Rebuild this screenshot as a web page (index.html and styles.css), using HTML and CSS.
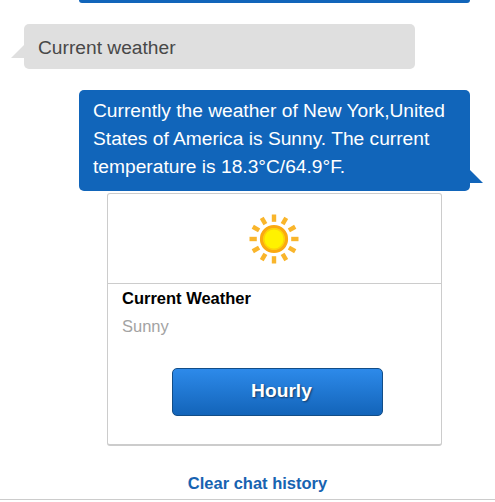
FILE: index.html
```
<!DOCTYPE html>
<html lang="en">
<head>
<meta charset="utf-8">
<title>Weather chat</title>
<link rel="stylesheet" href="styles.css">
</head>
<body>
<main class="chat">
  <div class="bubble bot previous"></div>
  <div class="bubble user">Current weather</div>
  <div class="bubble bot reply">Currently the weather of New York,United States of America is Sunny. The current temperature is 18.3°C/64.9°F.</div>
  <section class="card">
    <div class="card-image">
      <svg class="sun" viewBox="-25 -25 50 50" aria-hidden="true">
        <g stroke="#f9b52b" stroke-width="4.4">
          <path id="ray" d="M0-24.5V-17.2"/>
          <use href="#ray" transform="rotate(30)"/>
          <use href="#ray" transform="rotate(60)"/>
          <use href="#ray" transform="rotate(90)"/>
          <use href="#ray" transform="rotate(120)"/>
          <use href="#ray" transform="rotate(150)"/>
          <use href="#ray" transform="rotate(180)"/>
          <use href="#ray" transform="rotate(210)"/>
          <use href="#ray" transform="rotate(240)"/>
          <use href="#ray" transform="rotate(270)"/>
          <use href="#ray" transform="rotate(300)"/>
          <use href="#ray" transform="rotate(330)"/>
        </g>
        <circle r="12.4" fill="#fff200" stroke="#fba910" stroke-width="3.4"/>
        <circle r="10.2" fill="none" stroke="#fcd20a" stroke-width="1.4"/>
      </svg>
    </div>
    <div class="card-body">
      <h2 class="card-title">Current Weather</h2>
      <p class="card-text">Sunny</p>
      <button class="button" type="button">Hourly</button>
    </div>
  </section>
  <a class="clear">Clear chat history</a>
</main>
</body>
</html>
```
FILE: styles.css
```
* { box-sizing: border-box; }
body {
  margin: 0;
  background: #fff;
  font-family: "Liberation Sans", Arial, sans-serif;
  overflow: hidden;
}
.chat {
  display: flex;
  flex-direction: column;
  height: 500px;
  border-bottom: 1px solid #ccc;
}
.bubble {
  position: relative;
  flex: none;
  width: 391px;
  padding: 7px 14px 10px;
  border-radius: 5px;
  font-size: 19.2px;
  line-height: 28px;
}
.bot {
  margin-left: 79px;
  background: #1165ba;
  color: #fff;
}
.previous {
  height: 3px;
  padding: 0;
  border-radius: 0 0 5px 5px;
}
.user {
  margin: 21px 0 21px 24px;
  padding-top: 10px;
  padding-bottom: 7px;
  background: #dfdfdf;
  color: #484848;
}
.user::before,
.reply::after {
  content: "";
  position: absolute;
  width: 13px;
  height: 13px;
  background: inherit;
}
.user::before {
  right: 100%;
  bottom: 11px;
  clip-path: polygon(100% 0, 100% 100%, 0 100%);
}
.reply::after {
  left: 100%;
  bottom: 8px;
  clip-path: polygon(0 0, 100% 100%, 0 100%);
}
.card {
  flex: none;
  width: 335px;
  height: 253px;
  margin: 2px 0 0 107px;
  border: 1px solid #ccc;
  border-bottom-width: 2px;
  border-radius: 3px;
}
.card-image {
  display: flex;
  justify-content: center;
  height: 90px;
  padding: 20px 1px 0 0;
  border-bottom: 1px solid #ccc;
}
.sun {
  width: 50px;
  height: 50px;
}
.card-body { padding: 0 14px; }
.card-title,
.card-text {
  margin: 0;
  font-size: 16.5px;
  line-height: 28px;
}
.card-title { color: #000; }
.card-text { color: #a3a3a3; }
.button {
  display: block;
  width: 211px;
  height: 48px;
  margin: 28px auto 0 50px;
  padding: 0 8px 2px 16px;
  border: 1px solid #124d87;
  border-radius: 5px;
  background: linear-gradient(#2d8aea, #1364b9);
  color: #fff;
  font: bold 19.2px "Liberation Sans", Arial, sans-serif;
  text-shadow: 1px 1px 2px #123a64;
}
.clear {
  margin: 27px 0 0 20px;
  color: #1763b1;
  font-size: 16.5px;
  font-weight: bold;
  line-height: 20px;
  text-align: center;
}
```
